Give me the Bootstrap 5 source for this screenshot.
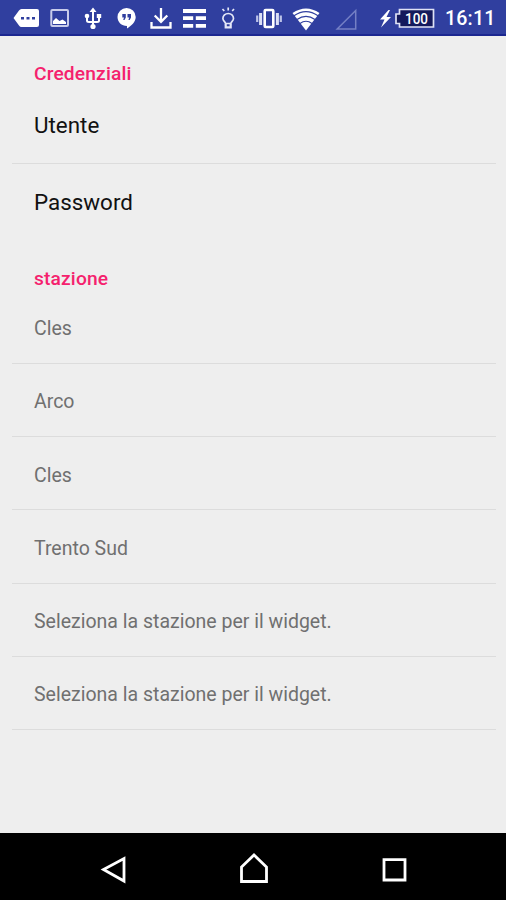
<!DOCTYPE html>
<html lang="it">
<head>
<meta charset="utf-8">
<meta name="viewport" content="width=device-width, initial-scale=1">
<title>Credenziali</title>
<link href="https://cdn.jsdelivr.net/npm/bootstrap@5.3.0/dist/css/bootstrap.min.css" rel="stylesheet">
<style>
body { font-family: Roboto, "Liberation Sans", sans-serif; background: #eee; }
.screen { height: 900px; overflow: hidden; }
.status-bar { height: 36px; background: #303f9f; border-bottom: 2px solid #1b2790; color: #fff; }
.status-bar svg { display: block; flex: none; height: 34px; }
.clock { font-size: 19.6px; font-weight: 500; line-height: 38px; letter-spacing: .15px; padding-left: 8px; }
.settings { padding: 0 10px 0 12px; }
.section-title { height: 53px; padding: 22px 0 0 22px; margin: 0; font-size: 19.2px; line-height: 32px; font-weight: 500; color: #f5216d; letter-spacing: .15px; }
.pref { padding: 4px 22px 0; font-size: 19.5px; color: #707070; border-bottom: 1.6px solid #dcdcdc; height: 73.2px; }
.pref-main { height: 74.6px; padding-top: 1px; font-size: 22.4px; color: #111; }
.pref-last { height: 77.4px; padding-top: 2px; border-bottom: 0; }
.pref-first { height: 70px; padding-top: 1px; }
.nav-keys { height: 67px; background: #000; }
</style>
</head>
<body>
<div class="screen d-flex flex-column">
  <header class="status-bar d-flex flex-shrink-0">
    <svg width="44" viewBox="0 0 44 34" fill="#fff"><path d="M21.500 9h15.500q2 0 2 2v14q0 2-2 2H21.500q-1.500 0-2.500-1.500L13.500 18l5.500-7.500q1-1.500 2.500-1.500z"/><path fill="#303f9f" d="M21 17h3v2.500h-3zM26.500 17h3v2.500h-3zM32 17h3v2.500h-3z"/></svg>
    <svg width="32" viewBox="44 0 32 34"><rect x="51.300" y="10" width="16.700" height="16" rx="1" fill="none" stroke="#c8ccea" stroke-width="2"/><path fill="#fff" d="M53 24v-3l3-3 3.500 3 3-1.500L66 22v2z"/></svg>
    <svg width="34" viewBox="76 0 34 34"><g fill="none" stroke="#fff" stroke-width="2"><path d="M93 11v16M87 16v4.500q0 1.500 2 1.500h8q2 0 2-1.500V16"/></g><path fill="#fff" d="M93 7.500l3.500 4.500h-7zM96.800 14h4.400v4h-4.400z"/><circle cx="87" cy="16" r="2.300" fill="#fff"/><circle cx="93" cy="26.500" r="2.600" fill="#fff"/></svg>
    <svg width="34" viewBox="110 0 34 34"><path fill="#fff" d="M126.500 8a9 9 0 0 1 9.200 9c0 5-4.500 9-8.700 11.500V26c-5.500 0-9.500-4-9.500-9a9 9 0 0 1 9-9z"/><path fill="#303f9f" d="M122.300 14h3.500v3.500l-1.300 2.500h-1.300l.8-2.500h-1.700zM127.500 14h3.500v3.500l-1.300 2.500h-1.300l.8-2.500h-1.700z"/></svg>
    <svg width="33" viewBox="144 0 33 34" fill="none" stroke="#fff" stroke-width="2.300"><path d="M161 8v13.500M154.700 15.500l6.300 6.300 6.300-6.300M151.500 22v5.500h19V22"/></svg>
    <svg width="35" viewBox="177 0 35 34" fill="#fff"><path d="M183 9h23v4h-23zM183 16.300h10.200v3.700H183zM195.800 16.300H206v3.700h-10.200zM183 24h10.200v3.700H183zM195.800 24H206v3.700h-10.200z"/></svg>
    <svg width="33" viewBox="212 0 33 34" fill="none" stroke="#e4e7f7" stroke-width="1.700"><path d="M228.200 7.500v3M222.500 9l1.800 2M234 9l-1.800 2M225.500 23.500c0-1.500-2.600-2.500-2.600-5a5.300 5 0 0 1 10.600 0c0 2.500-2.600 3.500-2.600 5z"/><path stroke-width="2.200" d="M225.700 24v3.300h5V24"/></svg>
    <svg width="45" viewBox="245 0 45 34"><rect x="264.700" y="10" width="8.600" height="17" rx="1" fill="none" stroke="#fff" stroke-width="2.600"/><path stroke="#dce0f5" stroke-width="3" d="M260.600 13v12M277.400 13v12"/><path stroke="#bcc3e8" stroke-width="2.200" d="M257.200 15.500v6.500M280.800 15.500v6.500"/></svg>
    <svg width="36" viewBox="290 0 36 34"><path fill="#fff" d="M292.500 13Q306 4 319.500 13L306 30.500z"/><g fill="none" stroke="#303f9f" stroke-width="1.200"><path d="M294 15.800q12-8.500 24 0M297 19.600q9-6.500 18 0M300 23.500q6-4.500 12 0"/></g></svg>
    <svg width="44" viewBox="326 0 44 34"><path fill="none" stroke="#7580c5" stroke-width="1.500" d="M355.700 10.500V29h-18.500z"/></svg>
    <svg width="67" viewBox="370 0 67 34"><path fill="#fff" d="M388.500 10l-8.500 9.500h4.500L381 27.500l10-10.500h-4.500l3.500-7z"/><path fill="#14195c" stroke="#dfe2f5" stroke-width="1.700" d="M399.500 9.500H433.500v17.500H399.500v-3.500h-3.500v-9.500h3.500z"/><text x="416.500" y="24" text-anchor="middle" fill="#fff" font-size="15" font-weight="500" textLength="23" lengthAdjust="spacingAndGlyphs">100</text></svg>
    <span class="clock">16:11</span>
  </header>

  <main class="settings flex-grow-1">
    <h2 class="section-title">Credenziali</h2>
    <div class="pref pref-main d-flex align-items-center">Utente</div>
    <div class="pref pref-main pref-last d-flex align-items-center">Password</div>
    <h2 class="section-title">stazione</h2>
    <div class="pref pref-first d-flex align-items-center">Cles</div>
    <div class="pref d-flex align-items-center">Arco</div>
    <div class="pref d-flex align-items-center">Cles</div>
    <div class="pref d-flex align-items-center">Trento Sud</div>
    <div class="pref d-flex align-items-center">Seleziona la stazione per il widget.</div>
    <div class="pref d-flex align-items-center">Seleziona la stazione per il widget.</div>
  </main>

  <nav class="nav-keys flex-shrink-0" aria-label="Navigazione">
    <svg class="d-block" width="506" height="67" viewBox="0 833 506 67" fill="none" stroke="#fff" stroke-width="2.800"><path d="M124 858.500v22.500l-20.500-11.500zM241.500 881.500V867l12.500-12 12.500 12v14.500zM384 859.700h21v20.300h-21z"/></svg>
  </nav>
</div>
<script src="https://cdn.jsdelivr.net/npm/bootstrap@5.3.0/dist/js/bootstrap.bundle.min.js"></script>
</body>
</html>
